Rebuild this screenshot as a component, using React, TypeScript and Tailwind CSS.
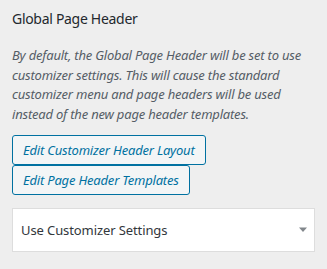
export default function App() {
  return (
    <div className="w-[327px] h-[269px] bg-[#eeeeee] px-3 pt-[9px] font-['Noto_Sans',sans-serif]">
      <h3 className="text-[14px] leading-[20px] font-normal tracking-[-0.3px] text-[#23282d]">
        Global Page Header
      </h3>

      <p className="mt-[17px] text-[13px] leading-[19.6px] italic tracking-[-0.2px] text-[#555d66]">
        By default, the Global Page Header will be set to use customizer
        settings. This will cause the standard customizer menu and page headers
        will be used instead of the new page header templates.
      </p>

      <div className="mt-[11px] flex flex-col items-start">
        <button className="h-[30px] px-[10px] bg-[#f3f5f6] border border-[#0071a1] rounded-[3px] text-[13px] italic tracking-[-0.2px] text-[#0071a1]">
          Edit Customizer Header Layout
        </button>
        <button className="h-[30px] px-[10px] bg-[#f3f5f6] border border-[#0071a1] rounded-[3px] text-[13px] italic tracking-[-0.2px] text-[#0071a1]">
          Edit Page Header Templates
        </button>
      </div>

      <div className="mt-[13px] h-[44px] bg-white border border-[#dddddd] flex items-center justify-between pl-[8px] pr-[5px]">
        <span className="text-[13px] tracking-[-0.1px] text-[#32373c]">Use Customizer Settings</span>
        <svg width="10" height="6" viewBox="0 0 10 6" className="mr-[1px]">
          <path d="M1 0.5h8L5 5z" fill="#82878c" />
        </svg>
      </div>
    </div>
  );
}
